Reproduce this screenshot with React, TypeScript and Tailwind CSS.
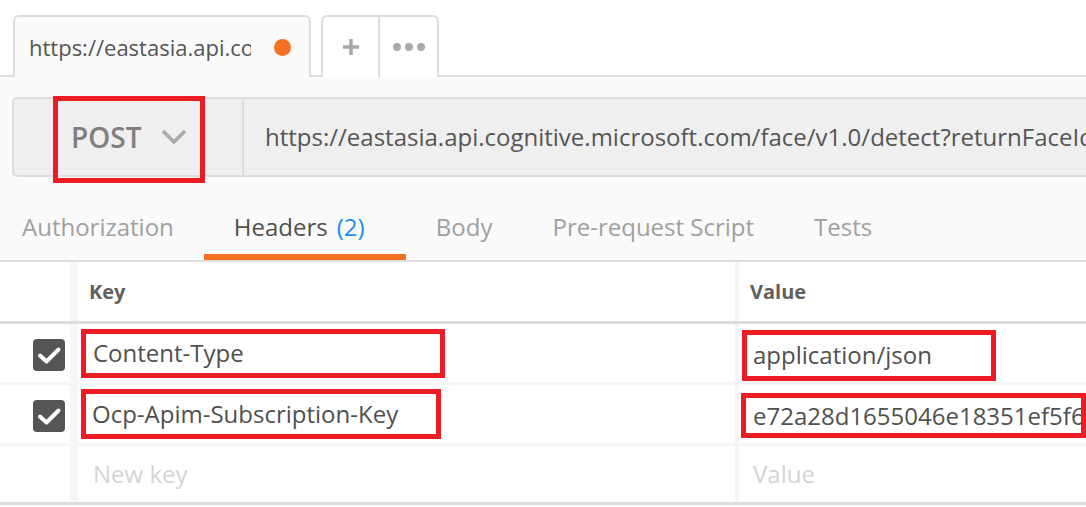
import React from "react";

const Check = () => (
  <div className="w-[32px] h-[32px] rounded-[4px] bg-[#555555] flex items-center justify-center">
    <svg width="32" height="32" viewBox="0 0 32 32">
      <polyline points="7,16.5 13.5,22.5 25.5,10.5" fill="none" stroke="#ffffff" strokeWidth="4" strokeLinecap="round" strokeLinejoin="round" />
    </svg>
  </div>
);

export default function App() {
  return (
    <div className="w-[1086px] h-[507px] overflow-hidden bg-white font-['Open_Sans',sans-serif] text-[#505050]">
      {/* Tab strip */}
      <div className="h-[77px] bg-white border-b-2 border-[#dddddd] flex items-end pl-[13px]">
        <div className="relative -mb-[2px] h-[62px] w-[298px] bg-[#fafafa] border-2 border-b-0 border-[#dddddd] rounded-t-[6px] flex items-center pl-[14px] pr-[10px]">
          <span className="text-[22px] text-[#555555] whitespace-nowrap overflow-hidden w-[222px]">https://eastasia.api.co</span>
          <span className="ml-auto mr-[8px] w-[17px] h-[17px] rounded-full bg-[#f47023]" />
        </div>
        <div className="ml-[10px] h-[62px] -mb-[2px] w-[118px] bg-white border-2 border-b-0 border-[#dddddd] rounded-t-[6px] flex">
          <div className="w-[57px] h-full flex items-center justify-center border-r-2 border-[#dddddd]">
            <svg width="18" height="18" viewBox="0 0 18 18">
              <line x1="9" y1="1" x2="9" y2="17" stroke="#a8a8a8" strokeWidth="3.5" />
              <line x1="1" y1="9" x2="17" y2="9" stroke="#a8a8a8" strokeWidth="3.5" />
            </svg>
          </div>
          <div className="flex-1 h-full flex items-center justify-center gap-[4px]">
            <span className="w-[8px] h-[8px] rounded-full bg-[#aaaaaa]" />
            <span className="w-[8px] h-[8px] rounded-full bg-[#aaaaaa]" />
            <span className="w-[8px] h-[8px] rounded-full bg-[#aaaaaa]" />
          </div>
        </div>
      </div>

      {/* Request area */}
      <div className="bg-[#fafafa] pt-[20px]">
        <div className="ml-[12px] h-[80px] bg-[#efefef] border-2 border-r-0 border-[#dddddd] rounded-l-[5px] flex items-stretch">
          <div className="w-[230px] border-r-2 border-[#dddddd] flex items-center pl-[57px] relative">
            <div className="absolute left-[39px] top-[-3px] w-[152px] h-[87px] border-[5px] border-[#ed1c24]" />
            <span className="text-[28px] font-semibold text-[#808080]">POST</span>
            <svg className="ml-[20px]" width="26" height="16" viewBox="0 0 26 16">
              <polyline points="2,2 13,13 24,2" fill="none" stroke="#aaaaaa" strokeWidth="3.5" />
            </svg>
          </div>
          <div className="flex-1 flex items-center pl-[21px] overflow-hidden">
            <span className="text-[24px] text-[#555555] whitespace-nowrap">https://eastasia.api.cognitive.microsoft.com/face/v1.0/detect?returnFaceId=true</span>
          </div>
        </div>

        {/* Sub tabs */}
        <div className="mt-[23px] flex border-b-2 border-[#dddddd] text-[24px] -ml-[8px]">
          <div className="h-[60px] px-[30px] flex items-center border-b-[6px] border-transparent text-[#a0a0a0]">Authorization</div>
          <div className="h-[60px] w-[202px] pl-[30px] flex items-center border-b-[6px] border-[#f47023] text-[#505050] whitespace-nowrap">
            Headers <span className="ml-[9px] text-[#1a8cf0]">(2)</span>
          </div>
          <div className="h-[60px] px-[30px] flex items-center border-b-[6px] border-transparent text-[#a0a0a0]">Body</div>
          <div className="h-[60px] px-[30px] flex items-center border-b-[6px] border-transparent text-[#a0a0a0] whitespace-nowrap">Pre-request Script</div>
          <div className="h-[60px] px-[30px] flex items-center border-b-[6px] border-transparent text-[#a0a0a0]">Tests</div>
        </div>
      </div>

      {/* Table */}
      <div className="bg-white">
        <div className="flex h-[62px] border-b-[3px] border-[#dddddd]">
          <div className="w-[78px] border-r-[8px] border-[#f6f6f6]" />
          <div className="w-[661px] border-r-[4px] border-[#f6f6f6] flex items-center pl-[11px] text-[20px] font-bold text-[#606060]">Key</div>
          <div className="flex-1 flex items-center pl-[11px] text-[20px] font-bold text-[#606060]">Value</div>
        </div>

        <div className="flex h-[61px] border-b-[3px] border-[#f6f6f6]">
          <div className="w-[78px] border-r-[8px] border-[#f6f6f6] flex items-center justify-end pr-[5px] pt-[4px]"><Check /></div>
          <div className="w-[661px] border-r-[4px] border-[#f6f6f6] flex items-center">
            <div className="ml-[3px] w-[364px] h-[49px] border-[5px] border-[#ed1c24] flex items-center pl-[7px] text-[24px] whitespace-nowrap">Content-Type</div>
          </div>
          <div className="flex-1 flex items-center">
            <div className="ml-[3px] mt-[4px] w-[254px] h-[51px] border-[5px] border-[#ed1c24] flex items-center pl-[6px] text-[24px] whitespace-nowrap">application/json</div>
          </div>
        </div>

        <div className="flex h-[61px] border-b-[3px] border-[#f6f6f6]">
          <div className="w-[78px] border-r-[8px] border-[#f6f6f6] flex items-center justify-end pr-[5px] pt-[4px]"><Check /></div>
          <div className="w-[661px] border-r-[4px] border-[#f6f6f6] flex items-center">
            <div className="ml-[3px] w-[360px] h-[50px] border-[5px] border-[#ed1c24] flex items-center pl-[6px] text-[24px] whitespace-nowrap">Ocp-Apim-Subscription-Key</div>
          </div>
          <div className="flex-1 flex items-center">
            <div className="ml-[2px] mt-[3px] w-[345px] h-[45px] border-[5px] border-[#ed1c24] flex items-center pl-[7px] text-[24px] whitespace-nowrap overflow-hidden">e72a28d1655046e18351ef5f6</div>
          </div>
        </div>

        <div className="flex h-[59px] border-b-[3px] border-[#dddddd]">
          <div className="w-[78px] border-r-[8px] border-[#f6f6f6]" />
          <div className="w-[661px] border-r-[4px] border-[#f6f6f6] flex items-center pl-[15px] text-[24px] text-[#d4d4d4]">New key</div>
          <div className="flex-1 flex items-center pl-[14px] text-[24px] text-[#d4d4d4]">Value</div>
        </div>
      </div>
    </div>
  );
}
